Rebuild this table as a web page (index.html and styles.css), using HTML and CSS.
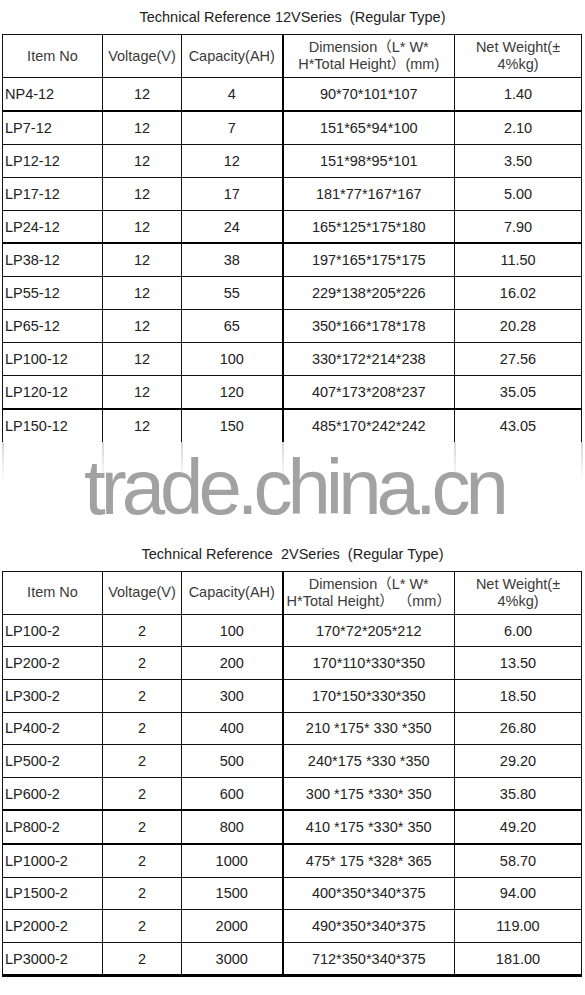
FILE: index.html
```html
<!DOCTYPE html>
<html>
<head>
<meta charset="utf-8">
<link rel="stylesheet" href="styles.css">
</head>
<body>
<div class="page">
  <div class="title">Technical Reference 12VSeries &nbsp;(Regular Type)</div>
  <table class="spec open">
    <colgroup><col class="c1"><col class="c2"><col class="c3"><col class="c4"><col class="c5"></colgroup>
    <thead>
      <tr><th>Item No</th><th>Voltage(V)</th><th>Capacity(AH)</th><th class="dim">Dimension（L* W*<br>H*Total Height）(mm)</th><th>Net Weight(±<br>4%kg)</th></tr>
    </thead>
    <tbody>
      <tr><td class="item">NP4-12</td><td>12</td><td>4</td><td class="dim">90*70*101*107</td><td>1.40</td></tr>
      <tr class="thick"><td class="item">LP7-12</td><td>12</td><td>7</td><td class="dim">151*65*94*100</td><td>2.10</td></tr>
      <tr><td class="item">LP12-12</td><td>12</td><td>12</td><td class="dim">151*98*95*101</td><td>3.50</td></tr>
      <tr><td class="item">LP17-12</td><td>12</td><td>17</td><td class="dim">181*77*167*167</td><td>5.00</td></tr>
      <tr><td class="item">LP24-12</td><td>12</td><td>24</td><td class="dim">165*125*175*180</td><td>7.90</td></tr>
      <tr class="thick"><td class="item">LP38-12</td><td>12</td><td>38</td><td class="dim">197*165*175*175</td><td>11.50</td></tr>
      <tr><td class="item">LP55-12</td><td>12</td><td>55</td><td class="dim">229*138*205*226</td><td>16.02</td></tr>
      <tr><td class="item">LP65-12</td><td>12</td><td>65</td><td class="dim">350*166*178*178</td><td>20.28</td></tr>
      <tr><td class="item">LP100-12</td><td>12</td><td>100</td><td class="dim">330*172*214*238</td><td>27.56</td></tr>
      <tr><td class="item">LP120-12</td><td>12</td><td>120</td><td class="dim">407*173*208*237</td><td>35.05</td></tr>
      <tr class="thick"><td class="item">LP150-12</td><td>12</td><td>150</td><td class="dim">485*170*242*242</td><td>43.05</td></tr>
    </tbody>
  </table>
  <div class="gap">
    <div class="fade"><span class="f1"></span><span class="f2"></span><span class="f3"></span><span class="f4"></span><span class="f5"></span></div>
    <div class="watermark">trade.china.cn</div>
  </div>
  <div class="title">Technical Reference &nbsp;2VSeries &nbsp;(Regular Type)</div>
  <table class="spec closed">
    <colgroup><col class="c1"><col class="c2"><col class="c3"><col class="c4"><col class="c5"></colgroup>
    <thead>
      <tr><th>Item No</th><th>Voltage(V)</th><th>Capacity(AH)</th><th class="dim">Dimension（L* W*<br>H*Total Height） （mm）</th><th>Net Weight(±<br>4%kg)</th></tr>
    </thead>
    <tbody>
      <tr><td class="item">LP100-2</td><td>2</td><td>100</td><td class="dim">170*72*205*212</td><td>6.00</td></tr>
      <tr><td class="item">LP200-2</td><td>2</td><td>200</td><td class="dim">170*110*330*350</td><td>13.50</td></tr>
      <tr><td class="item">LP300-2</td><td>2</td><td>300</td><td class="dim">170*150*330*350</td><td>18.50</td></tr>
      <tr><td class="item">LP400-2</td><td>2</td><td>400</td><td class="dim">210 *175* 330 *350</td><td>26.80</td></tr>
      <tr><td class="item">LP500-2</td><td>2</td><td>500</td><td class="dim">240*175 *330 *350</td><td>29.20</td></tr>
      <tr><td class="item">LP600-2</td><td>2</td><td>600</td><td class="dim">300 *175 *330* 350</td><td>35.80</td></tr>
      <tr class="thick"><td class="item">LP800-2</td><td>2</td><td>800</td><td class="dim">410 *175 *330* 350</td><td>49.20</td></tr>
      <tr class="thick"><td class="item">LP1000-2</td><td>2</td><td>1000</td><td class="dim">475* 175 *328* 365</td><td>58.70</td></tr>
      <tr><td class="item">LP1500-2</td><td>2</td><td>1500</td><td class="dim">400*350*340*375</td><td>94.00</td></tr>
      <tr><td class="item">LP2000-2</td><td>2</td><td>2000</td><td class="dim">490*350*340*375</td><td>119.00</td></tr>
      <tr><td class="item">LP3000-2</td><td>2</td><td>3000</td><td class="dim">712*350*340*375</td><td>181.00</td></tr>
    </tbody>
  </table>
</div>
</body>
</html>
```

FILE: styles.css
```css
html, body {
  margin: 0;
  padding: 0;
  background: #fff;
}
body {
  font-family: "Liberation Sans", Arial, "Noto Sans CJK SC", sans-serif;
  font-size: 14.5px;
  color: #222;
}
.page {
  width: 585px;
  padding-left: 2px;
  box-sizing: border-box;
}
.title {
  height: 34px;
  line-height: 34px;
  text-align: center;
  color: #222;
  padding-right: 2px;
}
.spec {
  border-collapse: collapse;
  table-layout: fixed;
  width: 579px;
}
.c1 { width: 100px; }
.c2 { width: 79px; }
.c3 { width: 101px; }
.c4 { width: 172px; }
.c5 { width: 127px; }
.spec th,
.spec td {
  border: 1px solid #111;
  padding: 0;
  text-align: center;
  white-space: nowrap;
  overflow: hidden;
}
.spec th {
  height: 42px;
  font-weight: normal;
  color: #3a3a3a;
  line-height: 17px;
}
.spec td {
  height: 31.9px;
  color: #222;
}
.spec.closed td {
  height: 31.6px;
}
.spec td.item {
  text-align: left;
  padding-left: 2px;
}
.spec .dim {
  border-left: 2px solid #000;
}
.spec tr.thick td {
  border-top: 2px solid #000;
}
.spec.open tbody tr:last-child td {
  border-bottom: none;
}
.spec.closed tbody tr:last-child td {
  border-bottom: 3px solid #000;
}
.gap {
  position: relative;
  height: 95px;
}
.fade {
  display: flex;
  height: 40px;
  -webkit-mask-image: linear-gradient(to bottom, rgba(0,0,0,0.6), rgba(0,0,0,0));
  mask-image: linear-gradient(to bottom, rgba(0,0,0,0.6), rgba(0,0,0,0));
}
.fade span {
  border-left: 2px solid #bbb;
  flex: none;
}
.f1 { width: 98px; }
.f2 { width: 77px; }
.f3 { width: 99px; }
.f4 { width: 170px; }
.f5 { width: 125px; border-right: 2px solid #bbb; }
.watermark {
  position: absolute;
  left: 82px;
  top: 0;
  font-family: "Liberation Sans", Arial, sans-serif;
  font-size: 78px;
  letter-spacing: -5px;
  color: #a2a2a2;
  line-height: 90px;
}
```
